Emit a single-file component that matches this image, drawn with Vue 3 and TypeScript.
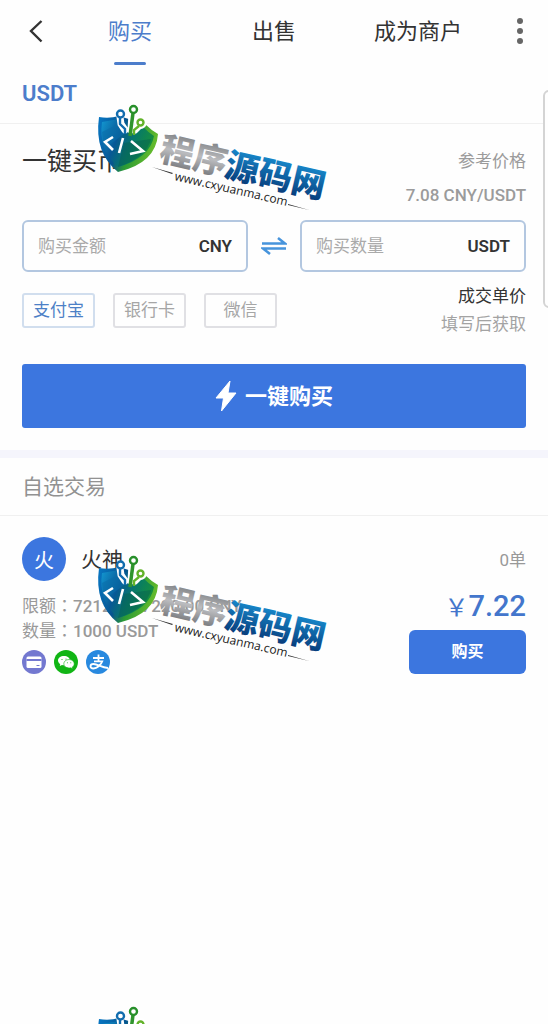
<script setup lang="ts">
import { ref } from 'vue'

interface Mark {
  id: number
  lettered: boolean
}

const tabs: string[] = ['购买', '出售', '成为商户']
const payments: string[] = ['支付宝', '银行卡', '微信']
const activeTab = ref(0)
const activePayment = ref(0)
const amount = ref('')
const quantity = ref('')
const marks: Mark[] = [
  { id: 1, lettered: true },
  { id: 2, lettered: true },
  { id: 3, lettered: false },
]
</script>

<template>
  <div class="page">
    <header class="topbar">
      <button class="icon-btn" aria-label="返回">
        <svg width="16" height="24" viewBox="0 0 16 24" fill="none" stroke="#333" stroke-width="2.4">
          <path d="M13.500 2 L3 12 L13.500 22.500" />
        </svg>
      </button>
      <nav class="tabs">
        <button
          v-for="(tab, i) in tabs"
          :key="tab"
          class="tab"
          :class="{ active: i === activeTab }"
          @click="activeTab = i"
        >{{ tab }}</button>
      </nav>
      <button class="icon-btn" aria-label="更多">
        <svg width="8" height="28" viewBox="0 0 8 28" fill="#666">
          <circle cx="4" cy="4" r="3" /><circle cx="4" cy="14" r="3" /><circle cx="4" cy="24" r="3" />
        </svg>
      </button>
    </header>

    <div class="coin"><a href="#usdt">USDT</a></div>

    <main>
      <section class="quick">
        <div class="quick-head">
          <h1>一键买币</h1>
          <div class="ref-price">
            <span>参考价格</span>
            <span class="latin">7.08 CNY/USDT</span>
          </div>
        </div>
        <div class="fields">
          <label class="field">
            <input v-model="amount" placeholder="购买金额" aria-label="购买金额" />
            <span>CNY</span>
          </label>
          <svg class="swap" width="26" height="20" viewBox="0 0 26 20" fill="none" stroke="#4794dc" stroke-width="2.6">
            <path d="M1 7.500 H24 L17 2" />
            <path d="M25 12.500 H2 L9 18" />
          </svg>
          <label class="field">
            <input v-model="quantity" placeholder="购买数量" aria-label="购买数量" />
            <span>USDT</span>
          </label>
        </div>
        <div class="pay-row">
          <div class="chips">
            <button
              v-for="(pay, i) in payments"
              :key="pay"
              class="chip"
              :class="{ active: i === activePayment }"
              :aria-pressed="i === activePayment"
              @click="activePayment = i"
            >{{ pay }}</button>
          </div>
          <div class="deal">
            <strong>成交单价</strong>
            <span>填写后获取</span>
          </div>
        </div>
        <button class="buy-all">
          <svg width="22" height="32" viewBox="0 0 22 32" fill="#fff" stroke="#fff" stroke-width="1" stroke-linejoin="round">
            <path d="M15 1 L1 18 H8.500 L6.500 31 L21 13 H13 Z" />
          </svg>
          <span>一键购买</span>
        </button>
      </section>

      <h2>自选交易</h2>

      <article class="offer">
        <div class="seller">
          <span class="avatar">火</span>
          <span class="name">火神</span>
          <span class="orders">0单</span>
        </div>
        <div class="offer-body">
          <div class="info">
            <p>限额<span class="colon">：</span><span class="latin">7212.78-7220.00 CNY</span></p>
            <p>数量<span class="colon">：</span><span class="latin">1000 USDT</span></p>
            <div class="methods">
              <svg width="24" height="24" viewBox="0 0 24 24" role="img" aria-label="银行卡">
                <circle cx="12" cy="12" r="12" fill="#7378d0" />
                <rect x="4.500" y="6.500" width="15" height="11.500" rx="1.500" fill="#fff" />
                <path d="M4.500 10 H19.500" stroke="#7378d0" stroke-width="2" />
                <path d="M14.500 15.500 H17.500" stroke="#7378d0" stroke-width="1" />
              </svg>
              <svg width="24" height="24" viewBox="0 0 24 24" role="img" aria-label="微信">
                <circle cx="12" cy="12" r="12" fill="#11b515" />
                <path d="M10 6 C6.500 6 4 8 4 10.500 C4 12 5 13.300 6.200 14.100 L5.800 16 L8 14.900 Q9 15.200 10 15.200 C13.400 15.200 16 13.200 16 10.500 C16 8 13.400 6 10 6 Z" fill="#fff" />
                <path d="M15 9.500 C12 9.500 9.800 11.400 9.800 13.800 C9.800 16.200 12 18 15 18 Q15.900 18 16.700 17.800 L18.600 18.800 L18.200 17.200 C19.500 16.400 20.200 15.200 20.200 13.800 C20.200 11.400 18 9.500 15 9.500 Z" fill="#fff" stroke="#11b515" stroke-width=".6" />
                <g fill="#11b515"><circle cx="8" cy="9.500" r=".6" /><circle cx="12" cy="9" r=".6" /><circle cx="13.400" cy="12.700" r=".5" /><circle cx="16.800" cy="12.700" r=".5" /></g>
              </svg>
              <svg width="24" height="24" viewBox="0 0 24 24" role="img" aria-label="支付宝">
                <circle cx="12" cy="12" r="12" fill="#2889df" />
                <g fill="none" stroke="#fff" stroke-width="1.800">
                  <path d="M7 8 H18 M12.500 4.500 V11 M8 11.300 H16.300 C15 15 11 18.500 7.500 18.500 C3.500 18.500 3.500 14 7.500 14 C12 14 15 17.500 22 18" />
                </g>
              </svg>
            </div>
          </div>
          <div class="price-col">
            <span class="price"><span class="yen">￥</span>7.22</span>
            <button class="buy">购买</button>
          </div>
        </div>
      </article>
    </main>

    <aside class="drawer" aria-hidden="true"></aside>

    <div class="marks" aria-hidden="true">
      <svg v-for="mark in marks" :key="mark.id" width="236" height="112" viewBox="97 102 236 112">
        <defs>
          <linearGradient id="rim" x1="0" y1="0" x2="1" y2="0.3">
            <stop offset="0" stop-color="#0877c4" /><stop offset=".45" stop-color="#06548f" />
            <stop offset=".65" stop-color="#2b9a35" /><stop offset="1" stop-color="#62b92c" />
          </linearGradient>
          <linearGradient id="core" x1="0" y1="0" x2="1" y2="0.4">
            <stop offset="0" stop-color="#1398d2" /><stop offset=".4" stop-color="#075895" />
            <stop offset=".7" stop-color="#087b66" /><stop offset="1" stop-color="#168f3d" />
          </linearGradient>
          <linearGradient id="silver" gradientUnits="userSpaceOnUse" x1="0" y1="-29" x2="0" y2="3">
            <stop offset="0" stop-color="#85878a" /><stop offset=".5" stop-color="#bbbcbf" /><stop offset="1" stop-color="#7e8084" />
          </linearGradient>
          <linearGradient id="ocean" gradientUnits="userSpaceOnUse" x1="0" y1="-29" x2="0" y2="3">
            <stop offset="0" stop-color="#1789cc" /><stop offset="1" stop-color="#08407f" />
          </linearGradient>
        </defs>
        <path d="M99 117 Q109 119 119 116 L145 124 Q151 130 158 134 Q156 163 118 172 Q94 153 99 117 Z" fill="url(#rim)" />
        <path d="M102 122 L119 119 L143 127 Q148 132 154 136 Q150 158 118 167 Q98 150 102 122 Z" fill="url(#core)" />
        <path d="M102 132 L118 124 L124 134 L104 149 Z" fill="#0a6ca9" opacity=".6" />
        <path d="M124 143 L151 139 Q147 157 118 167 Z" fill="#066052" opacity=".5" />
        <g fill="none" stroke="#fff" stroke-width="7" stroke-linecap="round">
          <path d="M120 117 L121 124 L125 130 M132 113 L131 130 M140 125 L135 130" />
          <circle cx="140.500" cy="122.500" r="3" />
        </g>
        <g fill="none" stroke-width="2.400">
          <path d="M120 118 V124 L125 129 V134" stroke="#116cae" />
          <path d="M133 113 L130 136" stroke="#2f942d" stroke-width="3.500" />
          <path d="M139 126 L134 130 V135" stroke="#63b32a" />
          <circle cx="120.500" cy="114" r="3.500" fill="#fff" stroke="#116cae" />
          <circle cx="133.500" cy="109.500" r="3.500" fill="#fff" stroke="#278f2a" />
          <circle cx="140.500" cy="122.500" r="3" fill="#fff" stroke="#63b32a" />
        </g>
        <path d="M113 137 L105 142 L113 150 M123 138 L119 153 M131 141 L143 151 L130 154" fill="none" stroke="#fff" stroke-width="2.600" />
        <g v-if="mark.lettered">
          <g transform="translate(158 160) rotate(13)">
            <text class="mark-name" fill="url(#silver)">程序</text>
            <text class="mark-name" x="67" y="1" fill="url(#ocean)">源码网</text>
          </g>
          <g transform="translate(174 180) rotate(13)">
            <text class="mark-url">www.cxyuanma.com</text>
          </g>
        </g>
        <path d="M152 167 L173 173 L172 174 Z M288 204 L309 210 L288 205 Z" fill="#333" />
      </svg>
    </div>
  </div>
</template>

<style>
body { background: #fefefe; }
</style>

<style scoped>
.page {
  position: relative;
  min-height: 100vh;
  overflow: hidden;
  background: #fefefe;
  color: #333;
  font-family: Roboto, "Noto Sans CJK SC", sans-serif;
  font-size: 17px;
}
.page, .page * { box-sizing: border-box; }
button { border: 0; background: none; padding: 0; font: inherit; color: inherit; cursor: pointer; }
h1, h2, p { margin: 0; font-weight: 400; }
.latin { font-weight: 500; }
.colon { font-family: "Noto Sans CJK TC", sans-serif; line-height: 1; }
.topbar { display: flex; height: 66px; }
.icon-btn { display: grid; flex: 0 0 58px; height: 62px; place-items: center; }
.icon-btn:first-child { padding-left: 14px; }
.icon-btn:last-child { padding-left: 2px; }
.tabs { display: flex; flex: 1; }
.tab {
  display: flex;
  flex: 1;
  flex-direction: column;
  align-items: center;
  justify-content: space-between;
  padding: 16px 0 0;
  font-size: 22px;
  line-height: 32px;
}
.tab::after { content: ""; width: 32px; height: 3px; margin-bottom: 1px; border-radius: 2px; }
.tab.active { color: #4c7dcb; }
.tab.active::after { background: #4c7dcb; }
.coin { height: 58px; padding: 12px 22px; border-bottom: 1px solid #f0f0f0; }
.coin a { color: #4c7dcb; font-size: 22px; font-weight: 600; line-height: 32px; text-decoration: none; }
.quick { padding: 20px 22px 22px; border-bottom: 8px solid #f5f5fc; }
.quick-head { display: flex; justify-content: space-between; }
h1 { font-size: 25px; line-height: 36px; }
.ref-price { display: flex; flex-direction: column; color: #9b9b9b; line-height: 34px; text-align: right; }
.fields { display: flex; align-items: center; gap: 13px; padding-top: 8px; }
.swap { flex: none; }
.field {
  display: flex;
  flex: 1;
  min-width: 0;
  height: 52px;
  align-items: center;
  padding: 0 14px;
  border: 2px solid #b3c7e0;
  border-radius: 6px;
  font-weight: 600;
}
.field input {
  flex: 1;
  min-width: 0;
  padding: 0;
  border: 0;
  outline: 0;
  background: none;
  color: #333;
  font: inherit;
  font-weight: 400;
}
.field input::placeholder { color: #aaa; opacity: 1; }
.pay-row { display: flex; align-items: center; justify-content: space-between; padding-top: 10px; }
.chips { display: flex; gap: 18px; }
.chip { width: 73px; height: 35px; border: 2px solid #e0e0e4; border-radius: 3px; color: #a6a6a6; line-height: 24px; }
.chip.active { border-color: #d1deee; color: #4c80c6; }
.deal { display: flex; flex-direction: column; color: #a3a3a3; line-height: 28px; text-align: right; }
.deal strong { color: #333; font-weight: 400; }
.buy-all {
  display: flex;
  width: 100%;
  height: 64px;
  margin-top: 26px;
  align-items: center;
  justify-content: center;
  gap: 8px;
  border-radius: 3px;
  background: #3c76df;
  color: #fff;
  font-size: 22px;
  font-weight: 700;
}
.buy-all span { padding-bottom: 4px; }
h2 { padding: 13px 22px 12px; border-bottom: 1px solid #f0f0f0; color: #929292; font-size: 21px; line-height: 32px; }
.offer { padding: 21px 22px; }
.seller { display: flex; align-items: center; gap: 15px; }
.avatar {
  display: grid;
  width: 44px;
  height: 44px;
  place-items: center;
  border-radius: 50%;
  background: #3c76df;
  color: #fff;
  font-size: 20px;
}
.name { font-size: 21px; padding-bottom: 2px; }
.orders { margin-left: auto; color: #999; padding-bottom: 2px; }
.offer-body { display: flex; justify-content: space-between; padding-top: 13px; }
.info { color: #999; line-height: 25px; white-space: nowrap; }
.methods { display: flex; gap: 8px; padding-top: 6px; }
.price-col { display: flex; flex-direction: column; align-items: flex-end; }
.price { display: flex; padding-bottom: 12px; color: #4376cc; font-size: 29px; font-weight: 500; line-height: 24px; }
.yen { font-family: "Noto Sans CJK SC", sans-serif; font-size: 24px; font-weight: 400; }
.buy { width: 117px; height: 44px; padding-bottom: 4px; border-radius: 6px; background: #3c76df; color: #fff; font-size: 16px; font-weight: 700; }
.drawer {
  position: absolute;
  top: 90px;
  right: -12px;
  width: 17px;
  height: 218px;
  border: 2px solid #d4d4d4;
  border-radius: 6px;
  background: #fefefe;
}
.marks {
  position: absolute;
  top: 102px;
  left: 97px;
  display: flex;
  flex-direction: column;
  gap: 339px;
  pointer-events: none;
}
.marks svg { flex: none; overflow: visible; }
.mark-name { font-family: "Noto Sans CJK SC", sans-serif; font-size: 34px; font-weight: 900; }
.mark-url { font-family: "Open Sans", sans-serif; font-size: 12px; fill: #222; }
</style>
